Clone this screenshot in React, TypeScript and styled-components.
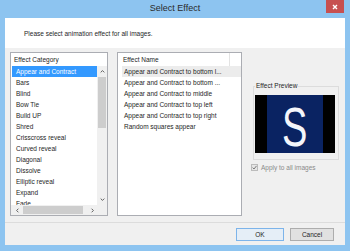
import React from "react";
import styled, { createGlobalStyle } from "styled-components";

const GlobalStyle = createGlobalStyle`
  html, body { margin: 0; padding: 0; background: #8dc4f0; }
  body { font-family: "Liberation Sans", Arial, sans-serif; }
  * { box-sizing: border-box; }
`;

const Window = styled.div`
  width: 350px;
  height: 251px;
  background: #8dc4f0;
  display: flex;
  flex-direction: column;
  padding: 0 5px 6px;
`;

const TitleBar = styled.div`
  height: 18px;
  flex-shrink: 0;
  display: grid;
  grid-template-columns: 1fr auto 1fr;
  align-items: start;
`;

const Title = styled.div`
  grid-column: 2;
  font-size: 9px;
  line-height: 17px;
  color: #2b2b2b;
`;

const CloseButton = styled.div`
  grid-column: 3;
  justify-self: end;
  width: 18px;
  height: 13px;
  margin-right: 1px;
  background: #c75050;
  display: flex;
  align-items: center;
  justify-content: center;
`;

const Client = styled.div`
  flex: 1;
  background: #f0f0f0;
  display: flex;
  flex-direction: column;
`;

const Banner = styled.div`
  height: 30px;
  flex-shrink: 0;
  background: #ffffff;
  padding-left: 19px;
  display: flex;
  align-items: center;
  font-size: 6.5px;
  color: #1e1e1e;
`;

const Content = styled.div`
  height: 174px;
  flex-shrink: 0;
  display: flex;
  padding: 4px 0 0 5px;
`;

const ListBox = styled.div<{ $w: number; $ml?: number }>`
  width: ${(p) => p.$w}px;
  height: 164px;
  margin-left: ${(p) => p.$ml ?? 0}px;
  flex-shrink: 0;
  border: 1px solid #abadb3;
  background: #ffffff;
  display: flex;
  flex-direction: column;
  overflow: hidden;
`;

const ListHead = styled.div`
  height: 13px;
  flex-shrink: 0;
  display: flex;
`;

const HeadCell = styled.div<{ $w?: number; $pad: number; $divider?: boolean }>`
  width: ${(p) => (p.$w ? `${p.$w}px` : "auto")};
  flex: ${(p) => (p.$w ? "none" : "1")};
  padding-left: ${(p) => p.$pad}px;
  display: flex;
  align-items: center;
  font-size: 6.5px;
  color: #1e1e1e;
  border-right: ${(p) => (p.$divider ? "1px solid #e3e3e3" : "none")};
`;

const ScrollArea = styled.div`
  flex: 1;
  display: grid;
  grid-template-columns: 1fr 10px;
  grid-template-rows: 1fr 10px;
  min-height: 0;
`;

const Rows = styled.div<{ $ml: number }>`
  padding-left: ${(p) => p.$ml}px;
  overflow: hidden;
  min-height: 0;
`;

const Row = styled.div<{ $sel?: "focus" | "soft"; $pad: number }>`
  height: 11px;
  line-height: 11px;
  padding-left: ${(p) => p.$pad}px;
  font-size: 6.5px;
  white-space: nowrap;
  overflow: hidden;
  color: ${(p) => (p.$sel === "focus" ? "#ffffff" : "#1e1e1e")};
  background: ${(p) =>
    p.$sel === "focus" ? "#3399ff" : p.$sel === "soft" ? "#ececec" : "transparent"};
`;

const VScroll = styled.div`
  background: #f0f0f0;
  display: flex;
  flex-direction: column;
`;

const HScroll = styled.div`
  background: #f0f0f0;
  display: flex;
  align-items: center;
  padding-left: 1px;
`;

const ArrowBox = styled.div<{ $h?: number; $w?: number }>`
  width: ${(p) => p.$w ?? 10}px;
  height: ${(p) => p.$h ?? 11}px;
  flex-shrink: 0;
  display: flex;
  align-items: center;
  justify-content: center;
`;

const VThumb = styled.div`
  height: 51px;
  margin: 0 1px;
  background: #cdcdcd;
`;

const VTrack = styled.div`
  flex: 1;
`;

const HThumb = styled.div`
  width: 60px;
  height: 8px;
  margin-left: 1px;
  background: #cdcdcd;
`;

const HTrack = styled.div`
  flex: 1;
`;

const Corner = styled.div`
  background: #f0f0f0;
`;

const SidePanel = styled.div`
  flex: 1;
  display: flex;
  flex-direction: column;
  align-items: flex-start;
  padding: 30px 0 0 9px;
`;

const PreviewGroup = styled.fieldset`
  width: 86px;
  margin: 0 0 0 2px;
  padding: 5px 3px 6px 1px;
  border: 1px solid #dcdcdc;
  min-width: 0;
`;

const PreviewLegend = styled.legend`
  padding: 0 1px;
  margin: 0;
  font-size: 6.5px;
  line-height: 8px;
  color: #1e1e1e;
`;

const PreviewImage = styled.div`
  width: 80px;
  height: 58px;
  background: #000000;
  display: flex;
  justify-content: center;
`;

const PreviewSlide = styled.div`
  width: 56px;
  height: 58px;
  background: #0a2362;
  display: flex;
  justify-content: center;
  align-items: flex-start;
  padding-top: 4px;
  overflow: hidden;
`;

const BigLetter = styled.span`
  display: inline-block;
  font-family: "Liberation Sans", Arial, sans-serif;
  font-size: 56px;
  line-height: 56px;
  color: #f4f6fb;
  transform: scaleX(0.68);
`;

const CheckRow = styled.div`
  margin-top: 4px;
  display: flex;
  align-items: center;
  gap: 3px;
`;

const CheckBox = styled.div`
  width: 7px;
  height: 7px;
  border: 1px solid #bcbcbc;
  background: #e6e6e6;
  display: flex;
  align-items: center;
  justify-content: center;
`;

const CheckLabel = styled.span`
  font-size: 6.5px;
  color: #8a8a8a;
`;

const Footer = styled.div`
  flex: 1;
  border-top: 1px solid #dcdcdc;
  display: flex;
  justify-content: flex-end;
  align-items: flex-start;
  gap: 6px;
  padding: 5px 11px 0 0;
`;

const Button = styled.div<{ $w: number; $default?: boolean }>`
  width: ${(p) => p.$w}px;
  height: 13px;
  border: 1px solid ${(p) => (p.$default ? "#7db4ea" : "#adadad")};
  background: ${(p) => (p.$default ? "#e5eef7" : "#e1e1e1")};
  display: flex;
  align-items: center;
  justify-content: center;
  font-size: 6.5px;
  color: #1e1e1e;
`;

type Dir = "up" | "down" | "left" | "right";
const Chevron = ({ dir }: { dir: Dir }) => {
  const rot = { up: 0, right: 90, down: 180, left: 270 }[dir];
  return (
    <svg width="5" height="5" viewBox="0 0 5 5" style={{ transform: `rotate(${rot}deg)` }}>
      <path d="M0.7 3.4 L2.5 1.6 L4.3 3.4" fill="none" stroke="#606060" strokeWidth="1" />
    </svg>
  );
};

const categories = [
  "Appear and Contract",
  "Bars",
  "Blind",
  "Bow Tie",
  "Build UP",
  "Shred",
  "Crisscross reveal",
  "Curved reveal",
  "Diagonal",
  "Dissolve",
  "Elliptic reveal",
  "Expand",
  "Fade",
];

const effects = [
  "Appear and Contract to bottom l...",
  "Appear and Contract to bottom ...",
  "Appear and Contract to middle",
  "Appear and Contract to top left",
  "Appear and Contract to top right",
  "Random squares appear",
];

export default function App() {
  return (
    <>
      <GlobalStyle />
      <Window>
        <TitleBar>
          <Title>Select Effect</Title>
          <CloseButton>
            <svg width="6" height="6" viewBox="0 0 6 6">
              <path d="M1 1 L5 5 M5 1 L1 5" stroke="#ffffff" strokeWidth="1.4" />
            </svg>
          </CloseButton>
        </TitleBar>
        <Client>
          <Banner>Please select animation effect for all images.</Banner>
          <Content>
            <ListBox $w={98}>
              <ListHead>
                <HeadCell $pad={3}>Effect Category</HeadCell>
              </ListHead>
              <ScrollArea>
                <Rows $ml={1}>
                  {categories.map((c, i) => (
                    <Row key={c} $pad={4} $sel={i === 0 ? "focus" : undefined}>
                      {c}
                    </Row>
                  ))}
                </Rows>
                <VScroll>
                  <ArrowBox>
                    <Chevron dir="up" />
                  </ArrowBox>
                  <VThumb />
                  <VTrack />
                  <ArrowBox>
                    <Chevron dir="down" />
                  </ArrowBox>
                </VScroll>
                <HScroll>
                  <ArrowBox $w={10} $h={10}>
                    <Chevron dir="left" />
                  </ArrowBox>
                  <HThumb />
                  <HTrack />
                  <ArrowBox $w={10} $h={10}>
                    <Chevron dir="right" />
                  </ArrowBox>
                </HScroll>
                <Corner />
              </ScrollArea>
            </ListBox>
            <ListBox $w={125} $ml={9}>
              <ListHead>
                <HeadCell $w={112} $pad={5} $divider>
                  Effect Name
                </HeadCell>
              </ListHead>
              <Rows $ml={4}>
                {effects.map((e, i) => (
                  <Row key={e} $pad={2} $sel={i === 0 ? "soft" : undefined}>
                    {e}
                  </Row>
                ))}
              </Rows>
            </ListBox>
            <SidePanel>
              <PreviewGroup>
                <PreviewLegend>Effect Preview</PreviewLegend>
                <PreviewImage>
                  <PreviewSlide>
                    <BigLetter>S</BigLetter>
                  </PreviewSlide>
                </PreviewImage>
              </PreviewGroup>
              <CheckRow>
                <CheckBox>
                  <svg width="5" height="5" viewBox="0 0 5 5">
                    <path d="M0.6 2.6 L2 4 L4.5 0.9" fill="none" stroke="#7a7a7a" strokeWidth="1" />
                  </svg>
                </CheckBox>
                <CheckLabel>Apply to all images</CheckLabel>
              </CheckRow>
            </SidePanel>
          </Content>
          <Footer>
            <Button $w={48} $default>
              OK
            </Button>
            <Button $w={44}>Cancel</Button>
          </Footer>
        </Client>
      </Window>
    </>
  );
}
